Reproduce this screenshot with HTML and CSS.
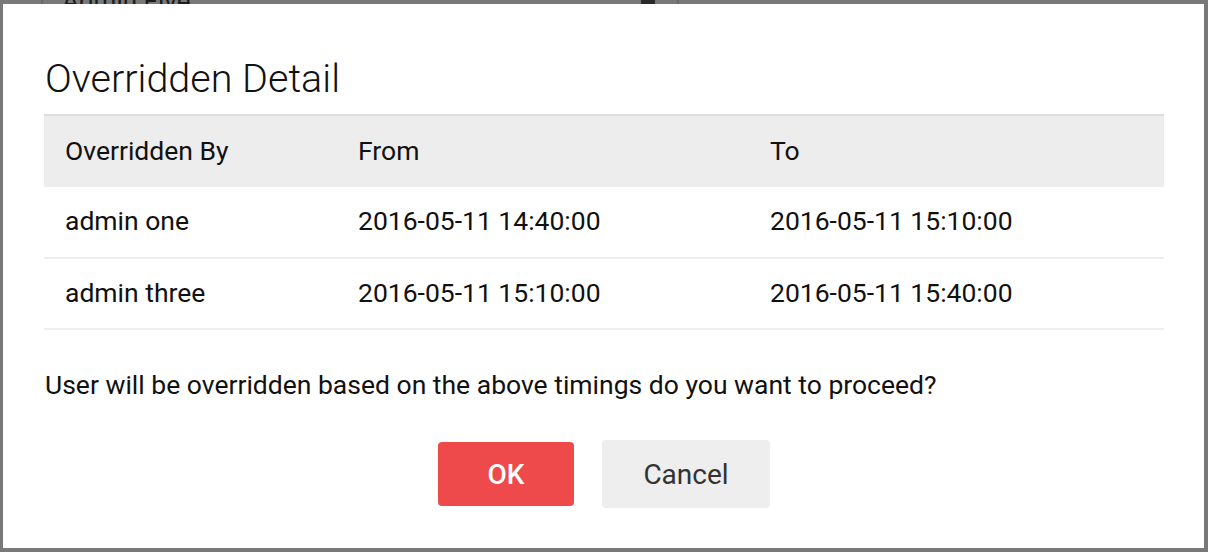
FILE: index.html
```html
<!DOCTYPE html>
<html lang="en">

<head>
    <meta charset="UTF-8">
    <meta name="viewport" content="width=device-width, initial-scale=1.0">
    <title>Overridden Detail</title>

    <link rel="stylesheet" href="styles.css">
</head>

<body>

    <div id="page">
        <div class="pageRow">
            <div class="pageName">Admin Five</div>
            <div class="pageIcon"></div>
        </div>
    </div>

    <div id="overlay">
        <div id="modal">
            <div class="heading">Overridden Detail</div>

            <table id="tbl">
                <thead>
                    <tr>
                        <th class="colBy">Overridden By</th>
                        <th class="colFrom">From</th>
                        <th>To</th>
                    </tr>
                </thead>
                <tbody>
                    <tr>
                        <td>admin one</td>
                        <td>2016-05-11 14:40:00</td>
                        <td>2016-05-11 15:10:00</td>
                    </tr>
                    <tr>
                        <td>admin three</td>
                        <td>2016-05-11 15:10:00</td>
                        <td>2016-05-11 15:40:00</td>
                    </tr>
                </tbody>
            </table>

            <p class="message">User will be overridden based on the above timings do you want to proceed?</p>

            <div class="actions">
                <button class="btn btnOk">OK</button>
                <button class="btn btnCancel">Cancel</button>
            </div>
        </div>
    </div>

</body>

</html>
```

FILE: styles.css
```css
* {
    box-sizing: border-box;
}

body {
    margin: 0;
    width: 1208px;
    height: 552px;
    overflow: hidden;
    background: #787878;
    font-family: Roboto, "Liberation Sans", sans-serif;
    color: #111;
}

#page {
    height: 552px;
}

.pageRow {
    margin: -14px 0 0 41px;
    width: 638px;
    height: 30px;
    border-left: 2px solid #6a6a6a;
    border-right: 2px solid #6a6a6a;
    display: flex;
    align-items: center;
    padding-left: 19px;
    padding-right: 22px;
}

.pageName {
    flex: 1;
    font-size: 26px;
    color: #1c1c1c;
}

.pageIcon {
    width: 14px;
    height: 26px;
    background: #2a2a2a;
}

#overlay {
    position: fixed;
    top: 0;
    left: 0;
    right: 0;
    bottom: 0;
    padding: 4px 4px 4px 3px;
}

#modal {
    height: 100%;
    background: #fff;
    padding: 0 40px 0 41px;
}

.heading {
    font-size: 39.5px;
    font-weight: 300;
    padding-top: 51px;
    line-height: 47px;
    margin-left: 1px;
}

#tbl {
    width: 1120px;
    margin-top: 12px;
    border-collapse: collapse;
    font-size: 26.5px;
}

th {
    text-align: left;
    font-weight: 400;
    background: #ededed;
    border-top: 2px solid #dedede;
    height: 72px;
    padding: 0 21px 3px;
}

td {
    height: 71px;
    padding: 0 21px 3px;
    border-bottom: 2px solid #efefef;
}

.colBy {
    width: 293px;
}

.colFrom {
    width: 412px;
}

.message {
    margin: 39px 0 0 1px;
    font-size: 26.5px;
}

.actions {
    display: flex;
    justify-content: center;
    align-items: center;
    gap: 28px;
    margin-top: 40px;
}

.btn {
    font-family: Roboto, "Liberation Sans", sans-serif;
    font-size: 28px;
    border: none;
    border-radius: 4px;
    cursor: pointer;
}

.btnOk {
    width: 136px;
    height: 64px;
    background: #ef4a4b;
    color: #fff;
    font-weight: 500;
}

.btnCancel {
    width: 168px;
    height: 68px;
    background: #eeeeee;
    color: #333;
}
```
